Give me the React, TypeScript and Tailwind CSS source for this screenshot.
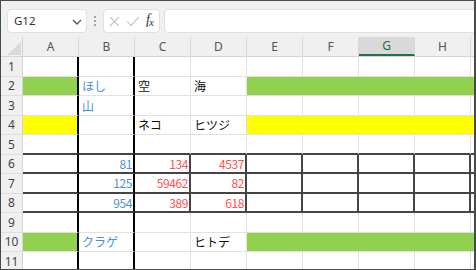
import React from "react";

const COLS = ["A", "B", "C", "D", "E", "F", "G", "H", "I"];
const ROW_H = [20, 19, 20, 19, 20, 19, 20, 19, 20, 19, 20];

type CellData = { t: string; color: "blue" | "red" | "black"; num?: boolean };

const DATA: Record<string, CellData> = {
  B2: { t: "ほし", color: "blue" },
  C2: { t: "空", color: "black" },
  D2: { t: "海", color: "black" },
  B3: { t: "山", color: "blue" },
  C4: { t: "ネコ", color: "black" },
  D4: { t: "ヒツジ", color: "black" },
  B6: { t: "81", color: "blue", num: true },
  C6: { t: "134", color: "red", num: true },
  D6: { t: "4537", color: "red", num: true },
  B7: { t: "125", color: "blue", num: true },
  C7: { t: "59462", color: "red", num: true },
  D7: { t: "82", color: "red", num: true },
  B8: { t: "954", color: "blue", num: true },
  C8: { t: "389", color: "red", num: true },
  D8: { t: "618", color: "red", num: true },
  B10: { t: "クラゲ", color: "blue" },
  D10: { t: "ヒトデ", color: "black" },
};

function fillOf(r: number, ci: number): "green" | "yellow" | null {
  const filledCol = ci === 0 || ci >= 4;
  if (!filledCol) return null;
  if (r === 2 || r === 10) return "green";
  if (r === 4) return "yellow";
  return null;
}

function Cell({ r, ci }: { r: number; ci: number }) {
  const col = COLS[ci];
  const fill = fillOf(r, ci);
  const d = DATA[`${col}${r}`];
  const isLast = ci === 8;

  let bg = "bg-white";
  if (fill === "green") bg = "bg-[#92d050]";
  if (fill === "yellow") bg = "bg-[#ffff00]";

  let right = "border-r border-r-[#e1e1e1]";
  if (ci === 0 || ci === 1) right = "border-r-2 border-r-black";
  else if (r >= 6 && r <= 8 && ci >= 2 && ci <= 7) right = "border-r-2 border-r-[#444444]";
  else if (fill === "green") right = "border-r border-r-[#92d050]";
  else if (fill === "yellow") right = "border-r border-r-[#ffff00]";
  if (isLast) right = "";

  let bottom = "border-b border-b-[#e1e1e1]";
  if (r >= 5 && r <= 8) bottom = "border-b-2 border-b-[#444444]";

  const width = isLast ? "w-[3px]" : "w-[56px]";

  let color = "text-[#111111]";
  if (d?.color === "blue") color = "text-[#4a90d8]";
  if (d?.color === "red") color = "text-[#ff4f4f]";

  return (
    <div
      className={`${width} shrink-0 h-full flex items-center overflow-hidden ${bg} ${right} ${bottom} ${
        d?.num ? "justify-end pr-[1px]" : "justify-start pl-[3px]"
      }`}
    >
      {d && (
        <span
          className={`${color} text-[12px] leading-none whitespace-nowrap ${d.num ? "tracking-[-0.4px]" : ""}`}
          style={{ fontFamily: '"Noto Sans CJK JP", "Noto Sans", sans-serif' }}
        >
          {d.t}
        </span>
      )}
    </div>
  );
}

function Row({ r }: { r: number }) {
  const h = ROW_H[r - 1];
  return (
    <div className={`flex ${h === 20 ? "h-[20px]" : "h-[19px]"}`}>
      <div className="w-[22px] shrink-0 h-full flex items-center justify-center bg-[#f0f0f0] border-r border-r-[#d4d4d4] border-b border-b-[#dedede] text-[12px] text-[#444444] leading-none">
        {r}
      </div>
      {COLS.map((_, ci) => (
        <Cell key={ci} r={r} ci={ci} />
      ))}
    </div>
  );
}

export default function App() {
  return (
    <div
      className="w-[476px] h-[270px] overflow-hidden bg-[#f0f0f0] border border-[#4a4a4a] border-r-2 box-border"
      style={{ fontFamily: '"Noto Sans", "Liberation Sans", sans-serif' }}
    >
      {/* Toolbar */}
      <div className="h-[36px] flex items-start pt-[8px] pl-[6px]">
        <div className="w-[80px] h-[24px] bg-white rounded-[4px] border border-[#e0e0e0] flex items-center pl-[6px] pr-[4px]">
          <span className="text-[11.5px] text-[#333333] leading-none flex-1">G12</span>
          <svg width="10" height="6" viewBox="0 0 10 6" className="mt-[1px]">
            <path d="M1 1 L5 5 L9 1" fill="none" stroke="#555555" strokeWidth="1.3" />
          </svg>
        </div>
        <div className="w-[16px] h-[24px] flex flex-col items-center justify-center gap-[2px]">
          <div className="w-[2px] h-[2px] rounded-full bg-[#8a8a8a]" />
          <div className="w-[2px] h-[2px] rounded-full bg-[#8a8a8a]" />
          <div className="w-[2px] h-[2px] rounded-full bg-[#8a8a8a]" />
        </div>
        <div className="w-[57px] h-[24px] bg-white rounded-[4px] border border-[#e0e0e0] flex items-center pl-[5px] gap-[6px]">
          <svg width="11" height="11" viewBox="0 0 11 11">
            <path d="M1 1 L10 10 M10 1 L1 10" stroke="#c4c4c4" strokeWidth="1.1" fill="none" />
          </svg>
          <svg width="14" height="11" viewBox="0 0 14 11">
            <path d="M1 5 L5 9.5 L13 1" stroke="#c4c4c4" strokeWidth="1.1" fill="none" />
          </svg>
          <span
            className="italic text-[14px] leading-none text-[#333333] -mt-[2px]"
            style={{ fontFamily: '"Liberation Serif", "DejaVu Serif", serif' }}
          >
            f<span className="text-[11px] relative top-[2px] -ml-[1px]">x</span>
          </span>
        </div>
        <div className="flex-1 h-[24px] ml-[4px] -mr-[6px] bg-white rounded-[4px] border border-[#e0e0e0]" />
      </div>

      {/* Column header */}
      <div className="flex h-[20px] border-b border-b-[#d4d4d4] bg-[#f0f0f0]">
        <div className="w-[22px] shrink-0 h-full border-r border-r-[#d4d4d4] flex items-end justify-end pb-[1px] pr-[1px]">
          <svg width="14" height="13" viewBox="0 0 14 13">
            <path d="M14 0 L14 13 L0 13 Z" fill="#d9d9d9" />
          </svg>
        </div>
        {COLS.map((c, ci) => {
          const isLast = ci === 8;
          const sel = c === "G";
          return (
            <div
              key={c}
              className={`${isLast ? "w-[3px]" : "w-[56px]"} shrink-0 h-full flex items-center justify-center text-[12px] leading-none ${
                isLast ? "" : "border-r border-r-[#d8d8d8]"
              } ${sel ? "bg-[#d9d9d9] text-[#217346] border-b-2 border-b-[#217346]" : "text-[#555555]"}`}
            >
              {isLast ? "" : c}
            </div>
          );
        })}
      </div>

      {/* Rows */}
      <div className="flex flex-col bg-white">
        {ROW_H.map((_, i) => (
          <Row key={i} r={i + 1} />
        ))}
      </div>
    </div>
  );
}
